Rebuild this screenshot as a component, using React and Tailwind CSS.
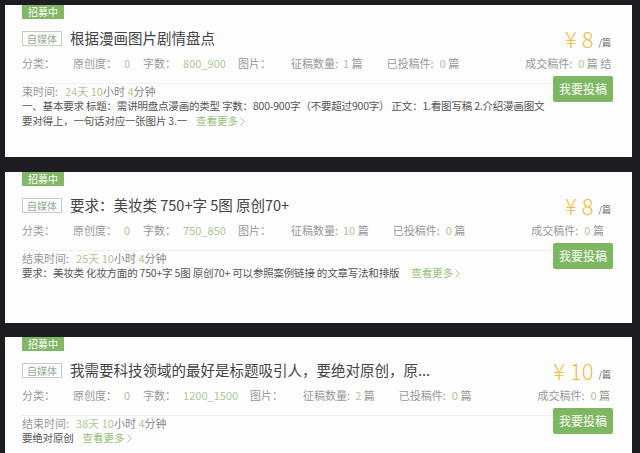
import React from "react";

const FONT = { fontFamily: '"Noto Sans CJK SC", "Noto Sans", sans-serif' };

function Chevron() {
  return (
    <svg width="5" height="9" viewBox="0 0 5 9" className="inline-block ml-[2px] -mt-[1px]">
      <path d="M0.5 0.5 L4.3 4.5 L0.5 8.5" fill="none" stroke="#9cc07e" strokeWidth="0.9" />
    </svg>
  );
}

function More() {
  return (
    <span className="text-[#9abf7b] whitespace-nowrap tracking-normal">
      查看更多
      <Chevron />
    </span>
  );
}

function Card({ title, price, stats, end, desc, h, extra }) {
  return (
    <div className={`bg-[#fdfdfd] ml-[5px] w-[627px] pl-[17px] pr-[19px] flex flex-col overflow-hidden ${h}`}>
      <div className="w-[42px] h-[14px] bg-[#82b765] text-white text-[10px] leading-[14px] text-center">招募中</div>
      <div className="flex items-center justify-between mt-[9px] h-[20px]">
        <div className="flex items-center">
          <div className="w-[40px] h-[15px] border border-[#c8cbc6] text-[10px] leading-[13px] text-center text-[#98ab94]">自媒体</div>
          <div className="ml-[8px] text-[14.5px] leading-[20px] text-[#444] whitespace-nowrap">{title}</div>
        </div>
        <div className="flex items-end pr-[2px] text-[#f4bb45]">
          <span className="text-[22px] leading-[24px] font-light">¥ {price}</span>
          <span className="text-[9px] leading-[12px] text-[#666] ml-[5px] mb-[1px]">/篇</span>
        </div>
      </div>
      <div className="flex items-center mt-[8px] h-[14px] text-[11px] leading-[14px] text-[#999] whitespace-nowrap">
        <span className="mr-[18px]">分类：</span>
        <span>原创度：</span>
        <span className="ml-[7px] text-[#adc896]">0</span>
        <span className="ml-[13px]">字数：</span>
        <span className="ml-[7px] text-[#adc896]">{stats.words}</span>
        <span className="ml-[12px]">图片：</span>
        <span className="ml-[20px]">征稿数量:</span>
        <span className="ml-[5px]">
          <span className="text-[#adc896]">{stats.count}</span> 篇
        </span>
        <span className="ml-[24px]">已投稿件:</span>
        <span className="ml-[6px]">
          <span className="text-[#adc896]">0</span> 篇
        </span>
        <span className="ml-[66px]">成交稿件:</span>
        <span className="ml-[6px]">
          <span className="text-[#adc896]">0</span> 篇{extra ? " 结" : ""}
        </span>
      </div>
      <div className="flex items-start mt-[13px]">
        <div className="flex-1 min-w-0 border-t border-[#f0f0f0] text-[#555]">
          <div className="text-[11px] leading-[13px] pt-[1px] whitespace-nowrap">
            <span className="text-[#999]">{end.label}</span>
            <span className="ml-[7px] text-[#adc896]">{end.d}天 </span>
            <span className="text-[#adc896]">10</span>
            <span className="text-[#888]">小时 </span>
            <span className="text-[#adc896]">4</span>
            <span className="text-[#888]">分钟</span>
          </div>
          <div className="text-[10.5px] leading-[15px] tracking-[-0.2px]">{desc}</div>
        </div>
        <button className="shrink-0 w-[60px] h-[26px] -mt-[7px] bg-[#7eb761] rounded-[2px] text-white text-[12px] leading-[26px] text-center">
          我要投稿
        </button>
      </div>
    </div>
  );
}

export default function App() {
  return (
    <div className="w-[640px] h-[453px] bg-[#1d1c21] overflow-hidden pt-[5px]" style={FONT}>
      <Card
        h="h-[152px]"
        title="根据漫画图片剧情盘点"
        price="8"
        stats={{ words: "800_900", count: "1" }}
        extra
        end={{ label: "束时间:", d: "24" }}
        desc={
          <>
            <div className="whitespace-nowrap">
              一、基本要求 标题：需讲明盘点漫画的类型 字数：800-900字（不要超过900字） 正文：1.看图写稿 2.介绍漫画图文
            </div>
            <div className="whitespace-nowrap">
              要对得上，一句话对应一张图片 3.一<span className="ml-[9px]"><More /></span>
            </div>
          </>
        }
      />
      <div className="mt-[15px]">
        <Card
          h="h-[151px]"
          title="要求：美妆类 750+字 5图 原创70+"
          price="8"
          stats={{ words: "750_850", count: "10" }}
          end={{ label: "结束时间:", d: "25" }}
          desc={
            <div className="whitespace-nowrap">
              要求：美妆类 化妆方面的 750+字 5图 原创70+ 可以参照案例链接 的文章写法和排版
              <span className="ml-[12px]"><More /></span>
            </div>
          }
        />
      </div>
      <div className="mt-[14px]">
        <Card
          h="h-[116px]"
          title="我需要科技领域的最好是标题吸引人，要绝对原创，原..."
          price="10"
          stats={{ words: "1200_1500", count: "2" }}
          end={{ label: "结束时间:", d: "38" }}
          desc={
            <div className="whitespace-nowrap">
              要绝对原创<span className="ml-[9px]"><More /></span>
            </div>
          }
        />
      </div>
    </div>
  );
}
